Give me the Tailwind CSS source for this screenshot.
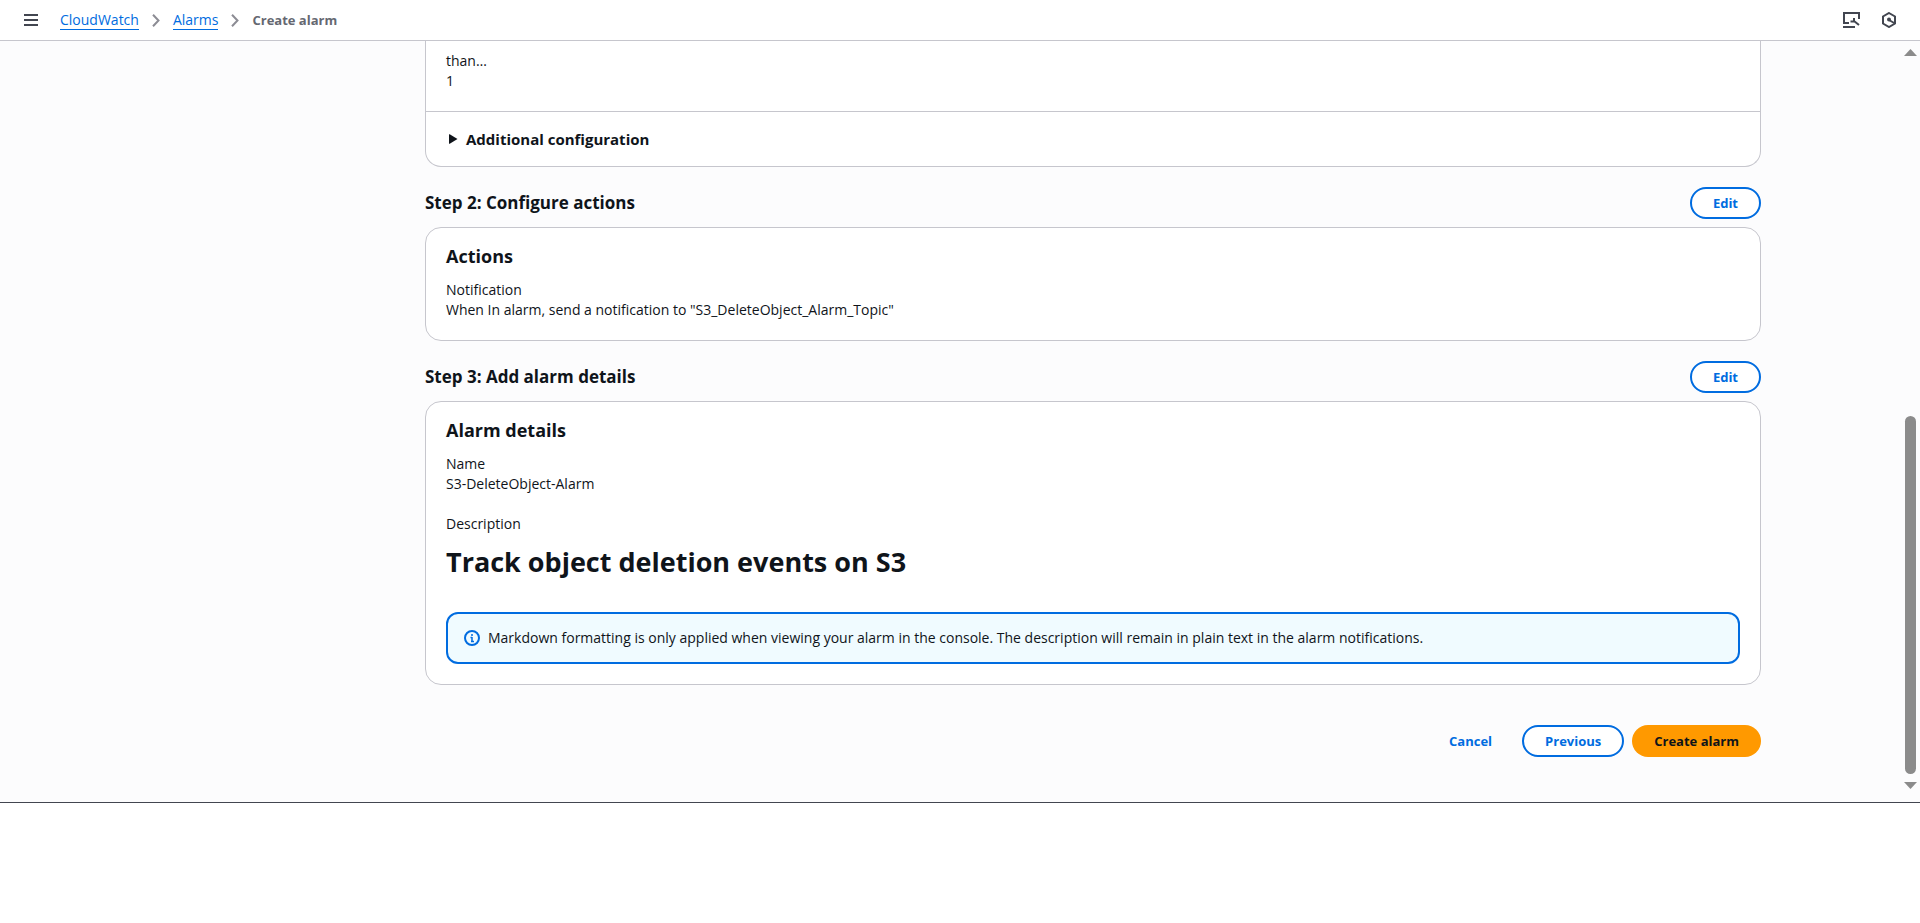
<!DOCTYPE html>
<html lang="en">
<head>
<meta charset="utf-8">
<title>Create alarm</title>
<script src="https://cdn.jsdelivr.net/npm/@tailwindcss/browser@4"></script>
</head>
<body class="flex h-screen flex-col bg-white font-['Open_Sans','Noto_Sans',sans-serif] text-[14px] leading-5 text-[#0f141a]">
<header class="flex h-[41px] shrink-0 items-center border-b border-[#c6c6cd] pr-[23px] pl-6">
  <button type="button" aria-label="Open navigation" class="mr-[22px] text-[#424650]">
    <svg class="block" width="14" height="12" viewBox="0 0 14 12" fill="none" stroke="currentColor" stroke-width="2"><path d="M0 1h14M0 6h14M0 11h14"/></svg>
  </button>
  <nav aria-label="Breadcrumbs" class="flex flex-1 items-center gap-[13px]">
    <a href="#" class="border-b border-[#006ce0] leading-[18px] text-[#006ce0]">CloudWatch</a>
    <svg width="8" height="13" viewBox="0 0 8 13" fill="none" stroke="#8c8c94" stroke-width="2"><path d="M1 .7l5.500 5.800L1 12.300"/></svg>
    <a href="#" class="border-b border-[#006ce0] leading-[18px] text-[#006ce0]">Alarms</a>
    <svg width="8" height="13" viewBox="0 0 8 13" fill="none" stroke="#8c8c94" stroke-width="2"><path d="M1 .7l5.500 5.800L1 12.300"/></svg>
    <span class="text-[13px] font-bold text-[#656871]" aria-current="page">Create alarm</span>
  </nav>
  <div class="flex items-center gap-[21px] text-[#424650]">
    <button type="button" aria-label="Tools">
      <svg class="block" width="17" height="16" viewBox="0 0 17 16" fill="none" stroke="currentColor" stroke-width="2"><path d="M6 11H1V1h15v6M0 15h12"/><path d="M7.500 9.500h3.500V6M11 9l5 4"/></svg>
    </button>
    <button type="button" aria-label="Assistant">
      <svg class="block" width="16" height="16" viewBox="0 0 16 16" fill="none" stroke="currentColor" stroke-width="2"><path d="M8 1l6 3.500v7L8 15l-6-3.500v-7zM8 8l6 3.500"/><circle cx="8" cy="7.500" r="2" fill="currentColor" stroke="none"/></svg>
    </button>
  </div>
</header>

<div class="flex shrink-0 border-b border-[#424650] bg-[#fcfcfd]">
  <main class="min-w-0 flex-1 pr-[139px] pb-[45px] pl-[425px]">
    <section class="rounded-b-2xl border border-t-0 border-[#c6c6cd] bg-white">
      <dl class="px-5 pt-[10px] pb-5">
        <dt>than…</dt>
        <dd>1</dd>
      </dl>
      <button type="button" aria-expanded="false" class="flex w-full items-center gap-2 rounded-b-2xl border-t border-[#c6c6cd] px-[23px] py-4 text-left text-[15px] leading-[22px] font-bold">
        <svg width="9" height="10" viewBox="0 0 9 10" fill="#0f141a"><path d="M0 0.500Q0 0 .7 .2L8.500 5 .7 9.800Q0 10 0 9.500z"/></svg>
        Additional configuration
      </button>
    </section>

    <div class="mt-5 mb-2 flex items-center justify-between">
      <h2 class="text-[17px] leading-[22px] font-bold">Step 2: Configure actions</h2>
      <button type="button" class="h-8 rounded-full border-2 border-[#006ce0] bg-white px-[21px] text-[13px] font-bold text-[#006ce0]">Edit</button>
    </div>
    <section class="rounded-2xl border border-[#c6c6cd] bg-white px-5 pt-4 pb-5">
      <h3 class="mb-3 text-[18px] leading-6 font-bold">Actions</h3>
      <dl>
        <dt>Notification</dt>
        <dd>When In alarm, send a notification to "S3_DeleteObject_Alarm_Topic"</dd>
      </dl>
    </section>

    <div class="mt-5 mb-2 flex items-center justify-between">
      <h2 class="text-[17px] leading-[22px] font-bold">Step 3: Add alarm details</h2>
      <button type="button" class="h-8 rounded-full border-2 border-[#006ce0] bg-white px-[21px] text-[13px] font-bold text-[#006ce0]">Edit</button>
    </div>
    <section class="rounded-2xl border border-[#c6c6cd] bg-white px-5 pt-4 pb-5">
      <h3 class="mb-3 text-[18px] leading-6 font-bold">Alarm details</h3>
      <dl>
        <dt>Name</dt>
        <dd class="mb-5">S3-DeleteObject-Alarm</dd>
        <dt>Description</dt>
        <dd class="pt-[10px] pb-8"><h1 class="text-[27px] leading-9 font-bold">Track object deletion events on S3</h1></dd>
      </dl>
      <div role="note" class="flex items-center gap-2 rounded-xl border-2 border-[#006ce0] bg-[#f0fbff] px-4 py-[14px]">
        <svg class="shrink-0" width="16" height="16" viewBox="0 0 16 16" fill="none" stroke="#006ce0" stroke-width="2"><circle cx="8" cy="8" r="7"/><path d="M8 4v2M8 7v5M6.500 7.500H8M7 11.500h3" stroke-width="1.500"/></svg>
        <p>Markdown formatting is only applied when viewing your alarm in the console. The description will remain in plain text in the alarm notifications.</p>
      </div>
    </section>

    <div class="mt-10 flex justify-end gap-2 text-[13px] font-bold">
      <button type="button" class="h-8 rounded-full px-[22px] text-[#006ce0]">Cancel</button>
      <button type="button" class="h-8 rounded-full border-2 border-[#006ce0] bg-white px-[21px] text-[#006ce0]">Previous</button>
      <button type="button" class="h-8 rounded-full bg-[#ff9900] px-[22px]">Create alarm</button>
    </div>
  </main>
  <div aria-hidden="true" class="flex w-5 shrink-0 flex-col items-center pt-2 pb-[13px]">
    <svg class="shrink-0" width="13" height="7" viewBox="0 0 13 7" fill="#8b8b8b"><path d="M6.500 0L13 7H0z"/></svg>
    <div class="flex w-full flex-1 flex-col items-center justify-end pb-2">
      <div class="h-[358px] w-[11px] rounded-full bg-[#8b8b8b]"></div>
    </div>
    <svg class="shrink-0" width="13" height="7" viewBox="0 0 13 7" fill="#8b8b8b"><path d="M0 0h13L6.500 7z"/></svg>
  </div>
</div>
</body>
</html>
